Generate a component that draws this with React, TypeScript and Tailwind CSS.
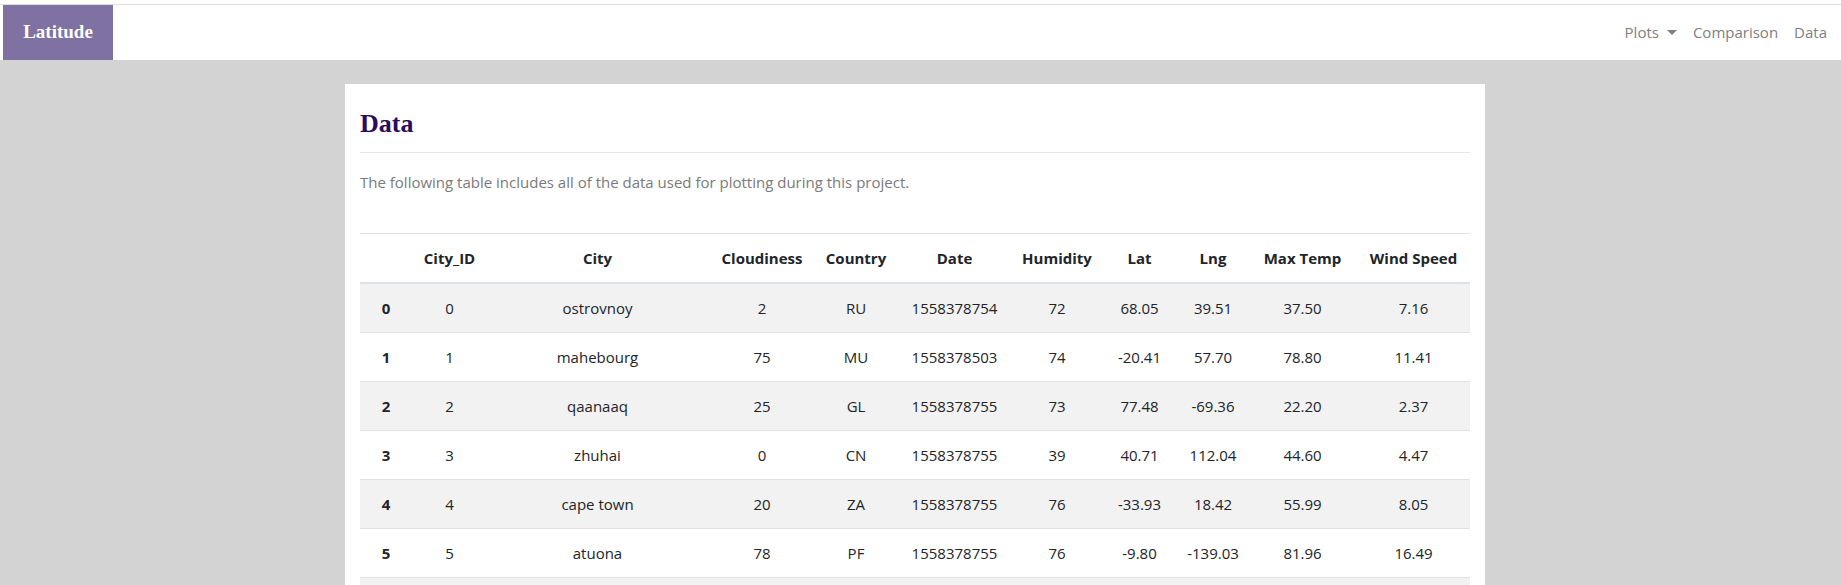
const columns = ['', 'City_ID', 'City', 'Cloudiness', 'Country', 'Date', 'Humidity', 'Lat', 'Lng', 'Max Temp', 'Wind Speed'];
const widths = ['w-[52px]', 'w-[75px]', 'w-[221px]', 'w-[108px]', 'w-[80px]', 'w-[117px]', 'w-[88px]', 'w-[77px]', 'w-[70px]', 'w-[109px]', 'w-[113px]'];

const rows = [
  ['0', '0', 'ostrovnoy', '2', 'RU', '1558378754', '72', '68.05', '39.51', '37.50', '7.16'],
  ['1', '1', 'mahebourg', '75', 'MU', '1558378503', '74', '-20.41', '57.70', '78.80', '11.41'],
  ['2', '2', 'qaanaaq', '25', 'GL', '1558378755', '73', '77.48', '-69.36', '22.20', '2.37'],
  ['3', '3', 'zhuhai', '0', 'CN', '1558378755', '39', '40.71', '112.04', '44.60', '4.47'],
  ['4', '4', 'cape town', '20', 'ZA', '1558378755', '76', '-33.93', '18.42', '55.99', '8.05'],
  ['5', '5', 'atuona', '78', 'PF', '1558378755', '76', '-9.80', '-139.03', '81.96', '16.49'],
];

const sans = "font-['Open_Sans','Noto_Sans',sans-serif]";
const serif = "font-['Liberation_Serif','Times_New_Roman',serif]";

const App = () => (
  <div className={`min-h-screen bg-[#d3d3d3] ${sans}`}>
    <div className="h-[4px] bg-white" />
    <nav className="h-[56px] bg-white border-t border-[#dedede] flex items-stretch justify-between">
      <div className={`ml-[3px] w-[110px] bg-[#7f71a1] flex items-center justify-center text-white font-bold text-[19px] ${serif}`}>
        Latitude
      </div>
      <div className="flex items-center gap-4 pr-[14px] text-[15px] text-[#808080]">
        <span className="flex items-center gap-[8px]">
          Plots
          <span className="w-0 h-0 border-l-[5px] border-r-[5px] border-t-[5px] border-l-transparent border-r-transparent border-t-[#808080]" />
        </span>
        <span>Comparison</span>
        <span>Data</span>
      </div>
    </nav>

    <main className="pt-[24px] pl-[345px]">
      <div className="w-[1140px] bg-white px-[15px] pt-[24px]">
        <h2 className={`text-[26px] leading-[31px] font-bold text-[#2b0b5e] ${serif}`}>Data</h2>
        <hr className="mt-[13px] border-[#e5e5e5]" />
        <p className="mt-[17px] text-[15px] leading-[24px] text-[#7a7a7a]">
          The following table includes all of the data used for plotting during this project.
        </p>

        <table className="mt-[39px] w-full table-fixed border-collapse text-[15px] leading-[24px] text-[#212529] text-center">
          <thead>
            <tr className="border-t border-b-2 border-[#dee2e6]">
              {columns.map((c, i) => (
                <th key={i} className={`${widths[i]} py-3 font-bold`}>{c}</th>
              ))}
            </tr>
          </thead>
          <tbody>
            {rows.map((r, ri) => (
              <tr key={ri} className={`border-t border-[#dee2e6] ${ri % 2 === 0 ? 'bg-[#f2f2f2]' : 'bg-white'}`}>
                {r.map((v, ci) => (
                  ci === 0
                    ? <th key={ci} className="py-3 font-bold">{v}</th>
                    : <td key={ci} className="py-3">{v}</td>
                ))}
              </tr>
            ))}
            <tr className="border-t border-[#dee2e6] bg-[#f2f2f2]">
              <td colSpan={11} className="h-[48px]" />
            </tr>
          </tbody>
        </table>
      </div>
    </main>
  </div>
);

export default App;
